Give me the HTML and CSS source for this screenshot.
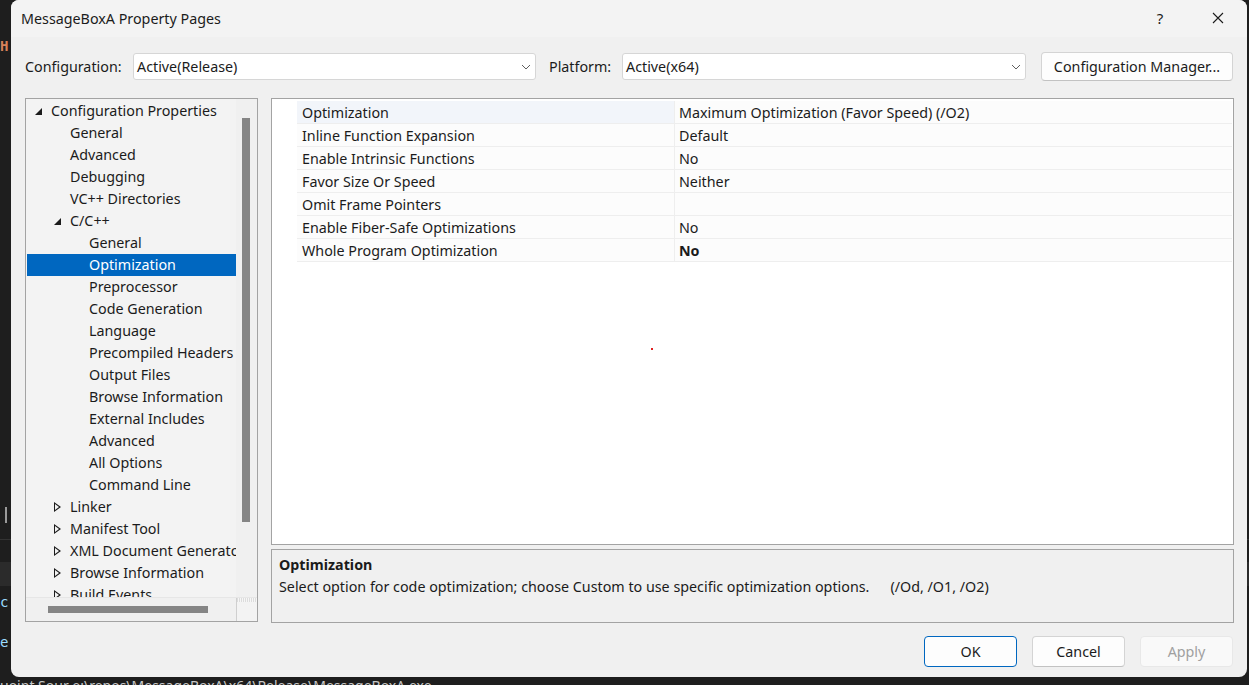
FILE: index.html
```html
<!DOCTYPE html>
<html lang="en">
<head>
<meta charset="utf-8">
<title>MessageBoxA Property Pages</title>
<link rel="stylesheet" href="styles.css">
</head>
<body>
<div class="desktop">
  <div class="editor">
    <div class="ed-line ed-h"><span class="tok-orange">H</span></div>
    <div class="ed-gap1"></div>
    <div class="ed-caret"></div>
    <div class="ed-sep"></div>
    <div class="ed-block"></div>
    <div class="ed-line ed-c"><span class="tok-blue">c</span></div>
    <div class="ed-line ed-e"><span class="tok-blue">e</span></div>
    <div class="ed-bottom">uoint Sour e:\repos\MessageBoxA\x64\Release\MessageBoxA.exe</div>
  </div>

  <div class="dialog">
    <div class="titlebar">
      <span class="title">MessageBoxA Property Pages</span>
      <div class="tb-btns">
        <span class="tb-help">?</span>
        <svg class="tb-close" width="12" height="12" viewBox="0 0 12 12"><path d="M1 1L11 11M11 1L1 11" stroke="#1b1b1b" stroke-width="1.1" fill="none"/></svg>
      </div>
    </div>

    <div class="config-row">
      <span class="lbl lbl-cfg">Configuration:</span>
      <div class="combo combo-cfg">
        <span class="combo-text">Active(Release)</span>
        <svg class="chev" width="10" height="6" viewBox="0 0 10 6"><path d="M1 1L5 5L9 1" stroke="#5f5f5f" stroke-width="1" fill="none"/></svg>
      </div>
      <span class="lbl lbl-plat">Platform:</span>
      <div class="combo combo-plat">
        <span class="combo-text">Active(x64)</span>
        <svg class="chev" width="10" height="6" viewBox="0 0 10 6"><path d="M1 1L5 5L9 1" stroke="#5f5f5f" stroke-width="1" fill="none"/></svg>
      </div>
      <button class="btn btn-cm">Configuration Manager...</button>
    </div>

    <div class="main">
      <div class="tree">
        <div class="tree-view">
          <div class="tree-items">
            <div class="trow lv0"><span class="tw tw-open"></span>Configuration Properties</div>
            <div class="trow lv1">General</div>
            <div class="trow lv1">Advanced</div>
            <div class="trow lv1">Debugging</div>
            <div class="trow lv1">VC++ Directories</div>
            <div class="trow lv1"><span class="tw tw-open"></span>C/C++</div>
            <div class="trow lv2">General</div>
            <div class="trow lv2 sel">Optimization</div>
            <div class="trow lv2">Preprocessor</div>
            <div class="trow lv2">Code Generation</div>
            <div class="trow lv2">Language</div>
            <div class="trow lv2">Precompiled Headers</div>
            <div class="trow lv2">Output Files</div>
            <div class="trow lv2">Browse Information</div>
            <div class="trow lv2">External Includes</div>
            <div class="trow lv2">Advanced</div>
            <div class="trow lv2">All Options</div>
            <div class="trow lv2">Command Line</div>
            <div class="trow lv1"><span class="tw tw-closed"></span>Linker</div>
            <div class="trow lv1"><span class="tw tw-closed"></span>Manifest Tool</div>
            <div class="trow lv1"><span class="tw tw-closed"></span>XML Document Generator</div>
            <div class="trow lv1"><span class="tw tw-closed"></span>Browse Information</div>
            <div class="trow lv1"><span class="tw tw-closed"></span>Build Events</div>
          </div>
          <div class="vscroll"><div class="vthumb"></div></div>
        </div>
        <div class="hscroll-row">
          <div class="hscroll"><div class="hthumb"></div></div>
          <div class="corner"></div>
        </div>
      </div>

      <div class="right">
        <div class="grid">
          <div class="grow selrow"><span class="gutter"></span><span class="gname">Optimization</span><span class="gval">Maximum Optimization (Favor Speed) (/O2)</span></div>
          <div class="grow"><span class="gutter"></span><span class="gname">Inline Function Expansion</span><span class="gval">Default</span></div>
          <div class="grow"><span class="gutter"></span><span class="gname">Enable Intrinsic Functions</span><span class="gval">No</span></div>
          <div class="grow"><span class="gutter"></span><span class="gname">Favor Size Or Speed</span><span class="gval">Neither</span></div>
          <div class="grow"><span class="gutter"></span><span class="gname">Omit Frame Pointers</span><span class="gval"></span></div>
          <div class="grow"><span class="gutter"></span><span class="gname">Enable Fiber-Safe Optimizations</span><span class="gval">No</span></div>
          <div class="grow"><span class="gutter"></span><span class="gname">Whole Program Optimization</span><span class="gval bold">No</span></div>
          <span class="reddot"></span>
        </div>
        <div class="desc">
          <div class="desc-title">Optimization</div>
          <div class="desc-text">Select option for code optimization; choose Custom to use specific optimization options.<span class="desc-sw">(/Od, /O1, /O2)</span></div>
        </div>
      </div>
    </div>

    <div class="buttons">
      <button class="btn btn-dlg btn-ok">OK</button>
      <button class="btn btn-dlg">Cancel</button>
      <button class="btn btn-dlg btn-dis">Apply</button>
    </div>
  </div>
</div>
</body>
</html>
```

FILE: styles.css
```css
* { box-sizing: border-box; }

html, body {
  margin: 0;
  padding: 0;
}

body {
  width: 1249px;
  height: 685px;
  overflow: hidden;
  background: #1e1e1e;
  font-family: "Noto Sans", "Open Sans", sans-serif;
  font-size: 14.3px;
  color: #1b1b1b;
}

.desktop {
  position: relative;
  width: 1249px;
  height: 685px;
  overflow: hidden;
}

/* background editor fragments */
.editor {
  display: flex;
  flex-direction: column;
  width: 1249px;
  height: 685px;
  font-family: "DejaVu Sans Mono", monospace;
  font-size: 14px;
  color: #cccccc;
}
.ed-line { height: 20px; line-height: 20px; padding-left: 0; }
.ed-h { margin-top: 36px; font-weight: bold; }
.tok-orange { color: #d7825a; }
.tok-blue { color: #9cdcfe; }
.ed-gap1 { height: 451px; }
.ed-caret { width: 2px; height: 16px; margin-left: 5px; background: #9a9a9a; }
.ed-sep { height: 1px; margin-top: 16px; background: #333333; }
.ed-block { height: 24px; margin-top: 22px; background: #2b2b2b; }
.ed-c { margin-top: 6px; }
.ed-e { margin-top: 20px; }
.ed-bottom {
  margin-top: auto;
  height: 8px;
  overflow: hidden;
  line-height: 18px;
  font-family: "Noto Sans", sans-serif;
  font-size: 14px;
  color: #c8c8c8;
  white-space: nowrap;
}

/* dialog window */
.dialog {
  position: absolute;
  left: 11px;
  top: 0;
  width: 1236px;
  height: 677px;
  background: #f0f0f0;
  border-radius: 8px;
  display: flex;
  flex-direction: column;
  overflow: hidden;
}

.titlebar {
  height: 37px;
  flex: 0 0 37px;
  background: #f3f3f3;
  display: flex;
  align-items: center;
  padding-left: 10px;
  padding-bottom: 1px;
}
.title { font-size: 14.3px; color: #1b1b1b; }
.tb-btns {
  margin-left: auto;
  display: flex;
  align-items: center;
  height: 100%;
}
.tb-help {
  width: 46px;
  margin-right: 29px;
  text-align: center;
  font-size: 15px;
  color: #1b1b1b;
}
.tb-close { margin: 0 23px 0 0; }

.config-row {
  margin-top: 15px;
  height: 29px;
  flex: 0 0 29px;
  display: flex;
  align-items: center;
  padding: 0 14px;
}
.lbl { white-space: nowrap; }
.lbl-cfg { width: 108px; }
.lbl-plat { width: 73px; margin-left: 13px; }
.combo {
  height: 27px;
  background: #ffffff;
  border: 1px solid #d6d6d6;
  border-radius: 3px;
  display: flex;
  align-items: center;
  padding-left: 3px;
  padding-right: 4px;
}
.combo-cfg { width: 403px; }
.combo-plat { width: 404px; }
.combo-text { flex: 1; }
.chev { flex: 0 0 10px; }

.btn {
  font-family: inherit;
  font-size: 14.3px;
  color: #1b1b1b;
  background: #fdfdfd;
  border: 1px solid #d4d4d4;
  border-bottom-color: #c2c2c2;
  border-radius: 4px;
  padding: 0;
  margin: 0;
}
.btn-cm {
  margin-left: 15px;
  width: 192px;
  height: 29px;
}

.main {
  margin-top: 17px;
  height: 525px;
  flex: 0 0 525px;
  display: flex;
  gap: 13px;
  padding: 0 13px 0 14px;
}

/* tree */
.tree {
  width: 233px;
  height: 524px;
  border: 1px solid #a3a3a3;
  background: #f3f3f3;
  display: flex;
  flex-direction: column;
}
.tree-view {
  height: 498px;
  display: flex;
  overflow: hidden;
}
.tree-items {
  width: 210px;
  overflow: hidden;
  padding-left: 1px;
  padding-top: 1px;
}
.trow {
  position: relative;
  height: 22px;
  line-height: 22px;
  white-space: nowrap;
  color: #1b1b1b;
}
.lv0 { padding-left: 24px; }
.lv1 { padding-left: 43px; }
.lv2 { padding-left: 62px; }
.trow.sel { background: #0067c0; color: #ffffff; }
.tw {
  position: absolute;
  top: 8px;
}
.lv0 .tw { left: 8px; }
.lv1 .tw { left: 27px; }
.tw-open {
  width: 0;
  height: 0;
  border-style: solid;
  border-width: 0 0 7px 7px;
  border-color: transparent transparent #1b1b1b transparent;
}
.tw-closed {
  top: 6px;
  left: 28px;
  width: 8px;
  height: 10px;
}
.tw-closed::before {
  content: "";
  position: absolute;
  left: 0;
  top: 0;
  border-style: solid;
  border-width: 5px 0 5px 7px;
  border-color: transparent transparent transparent #1b1b1b;
}
.tw-closed::after {
  content: "";
  position: absolute;
  left: 1px;
  top: 2px;
  border-style: solid;
  border-width: 3px 0 3px 4px;
  border-color: transparent transparent transparent #f3f3f3;
}
.vscroll {
  width: 21px;
  background: #f0f0f0;
  padding: 19px 0 0 6px;
}
.vthumb {
  width: 8px;
  height: 404px;
  background: #858585;
}
.hscroll-row {
  height: 24px;
  display: flex;
  border-top: 1px solid #e6e6e6;
}
.hscroll {
  width: 210px;
  background: #f0f0f0;
  padding: 8px 0 0 22px;
}
.hthumb {
  width: 160px;
  height: 7px;
  background: #858585;
}
.corner {
  width: 21px;
  border-left: 1px solid #cfcfcf;
  background:
    repeating-linear-gradient(90deg, #dcdcdc 0 1px, #f6f6f6 1px 2px) top / 100% 4px no-repeat,
    #f3f3f3;
}

/* property grid */
.right {
  width: 963px;
  display: flex;
  flex-direction: column;
  gap: 4px;
}
.grid {
  position: relative;
  height: 448px;
  border: 1px solid #a3a3a3;
  background: #ffffff;
  padding-top: 2px;
}
.grow {
  display: flex;
  height: 23px;
  line-height: 24px;
  white-space: nowrap;
}
.gutter { width: 25px; flex: 0 0 25px; background: #ffffff; }
.gname {
  width: 378px;
  flex: 0 0 378px;
  padding-left: 5px;
  background: #fcfcfc;
  border-bottom: 1px solid #eeeeee;
  border-right: 1px solid #eeeeee;
}
.gval {
  flex: 1;
  padding-left: 4px;
  background: #fcfcfc;
  border-bottom: 1px solid #eeeeee;
  margin-right: 1px;
}
.selrow .gname { background: #f2f5fa; }
.bold { font-weight: bold; }
.reddot {
  position: absolute;
  left: 379px;
  top: 249px;
  width: 2px;
  height: 2px;
  background: #e02020;
}

.desc {
  height: 74px;
  border: 1px solid #a3a3a3;
  background: #f0f0f0;
  padding: 4px 7px;
  line-height: 22px;
}
.desc-title { font-weight: bold; }
.desc-sw { margin-left: 21px; }

.buttons {
  margin-top: 13px;
  display: flex;
  justify-content: flex-end;
  gap: 15px;
  padding-right: 14px;
}
.btn-dlg {
  width: 93px;
  height: 31px;
}
.btn-ok { border: 1px solid #0067c0; }
.btn-dis {
  color: #a0a0a0;
  background: #f9f9f9;
  border: 1px solid #e8e8e8;
}
```
